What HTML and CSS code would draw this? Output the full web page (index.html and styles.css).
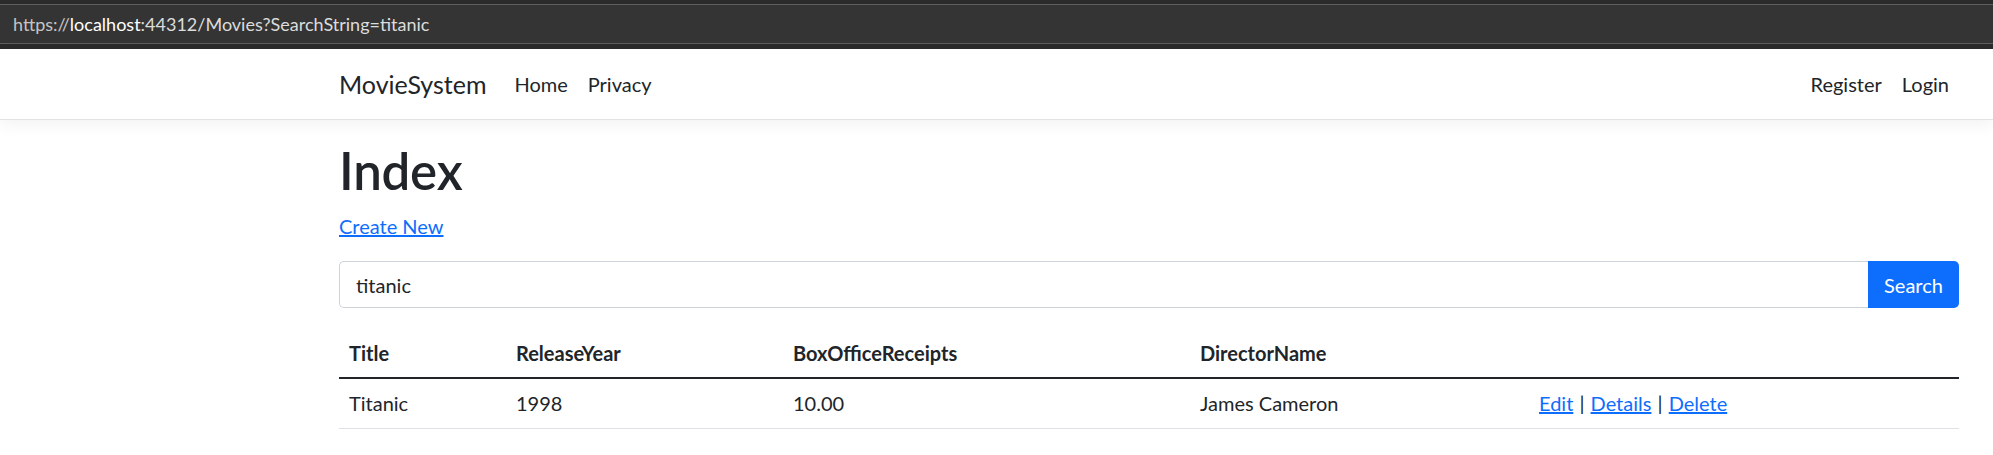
FILE: index.html
```html
<!DOCTYPE html>
<html lang="en">
<head>
<meta charset="utf-8">
<title>Index - MovieSystem</title>
<link rel="stylesheet" href="styles.css">
</head>
<body>
<div class="chrome">
  <div class="urlbar"><span class="url"><span class="scheme">https://</span><span class="host">localhost</span><span class="path">:44312/Movies?SearchString=titanic</span></span></div>
</div>
<header class="navbar">
  <div class="container nav-inner">
    <a class="brand" href="#">MovieSystem</a>
    <ul class="nav nav-main">
      <li><a class="nav-link" href="#">Home</a></li>
      <li><a class="nav-link" href="#">Privacy</a></li>
    </ul>
    <ul class="nav nav-user">
      <li><a class="nav-link" href="#">Register</a></li>
      <li><a class="nav-link" href="#">Login</a></li>
    </ul>
  </div>
</header>
<main class="container page">
  <h1 class="title">Index</h1>
  <p class="create"><a class="link" href="#">Create New</a></p>
  <form class="search">
    <input class="search-input" type="text" value="titanic">
    <button class="search-btn" type="button">Search</button>
  </form>
  <table class="table">
    <colgroup>
      <col class="c1"><col class="c2"><col class="c3"><col class="c4"><col class="c5">
    </colgroup>
    <thead>
      <tr><th>Title</th><th>ReleaseYear</th><th>BoxOfficeReceipts</th><th>DirectorName</th><th></th></tr>
    </thead>
    <tbody>
      <tr>
        <td>Titanic</td>
        <td>1998</td>
        <td>10.00</td>
        <td>James Cameron</td>
        <td class="actions"><a class="link" href="#">Edit</a> | <a class="link" href="#">Details</a> | <a class="link" href="#">Delete</a></td>
      </tr>
    </tbody>
  </table>
</main>
</body>
</html>
```

FILE: styles.css
```css
* { box-sizing: border-box; }

html, body {
  margin: 0;
  padding: 0;
  background: #ffffff;
}

body {
  font-family: Lato, "Open Sans", sans-serif;
  font-size: 20px;
  line-height: 30px;
  color: #212529;
}

/* browser address bar */
.chrome {
  height: 49px;
  background: #2b2b2b;
  padding-top: 4px;
}

.urlbar {
  height: 40px;
  background: #343434;
  border-top: 1px solid #5e5e5e;
  border-bottom: 1px solid #5e5e5e;
  display: flex;
  align-items: center;
  padding-left: 13px;
}

.url {
  font-size: 18px;
  line-height: 20px;
  color: #d4d4d4;
}

.scheme { color: #c4c4c4; }
.host { color: #ffffff; }
.path { color: #dcdcdc; }

/* layout */
.container {
  width: 1620px;
  margin-left: 339px;
}

/* navbar */
.navbar {
  background: #ffffff;
  border-bottom: 1px solid #e3e3e3;
  box-shadow: 0 5px 15px rgba(0, 0, 0, 0.05);
  padding: 10px 0;
  position: relative;
}

.nav-inner {
  display: flex;
  align-items: center;
}

.brand {
  font-size: 25px;
  line-height: 37px;
  padding: 6px 0;
  margin-right: 18px;
  color: #212529;
  text-decoration: none;
}

.nav {
  list-style: none;
  margin: 0;
  padding: 0;
  display: flex;
}

.nav-user { margin-left: auto; }

.nav-link {
  display: block;
  padding: 10px 10px;
  color: #212529;
  text-decoration: none;
  font-size: 20px;
  line-height: 30px;
}

/* page content */
.page {
  padding-top: 20px;
}

.title {
  font-size: 51px;
  line-height: 61px;
  font-weight: 600;
  margin: 0 0 10px;
  letter-spacing: -0.2px;
}

.create {
  margin: 0 0 20px;
}

.link {
  color: #0d6efd;
  text-decoration: underline;
}

.search {
  display: flex;
  margin: 0 0 19px;
}

.search-input {
  flex: 1;
  height: 47px;
  border: 1px solid #ced4da;
  border-right: none;
  border-radius: 5px 0 0 5px;
  padding: 0 16px;
  font-family: inherit;
  font-size: 20px;
  color: #212529;
  outline: none;
}

.search-btn {
  width: 91px;
  height: 47px;
  border: none;
  border-radius: 0 5px 5px 0;
  background: #0d6efd;
  color: #ffffff;
  font-family: inherit;
  font-size: 20px;
  padding: 0;
}

/* table */
.table {
  width: 100%;
  border-collapse: collapse;
  table-layout: fixed;
}

.c1 { width: 167px; }
.c2 { width: 277px; }
.c3 { width: 407px; }
.c4 { width: 339px; }
.c5 { width: 430px; }

.table th,
.table td {
  padding: 10px;
  text-align: left;
  vertical-align: top;
  line-height: 30px;
}

.table th {
  font-weight: 700;
  padding: 11px 10px 9px;
  border-bottom: 2px solid #212529;
}

.table td {
  padding: 9px 10px 10px;
  border-bottom: 1px solid #dee2e6;
}

.actions {
  word-spacing: 1px;
}
```
